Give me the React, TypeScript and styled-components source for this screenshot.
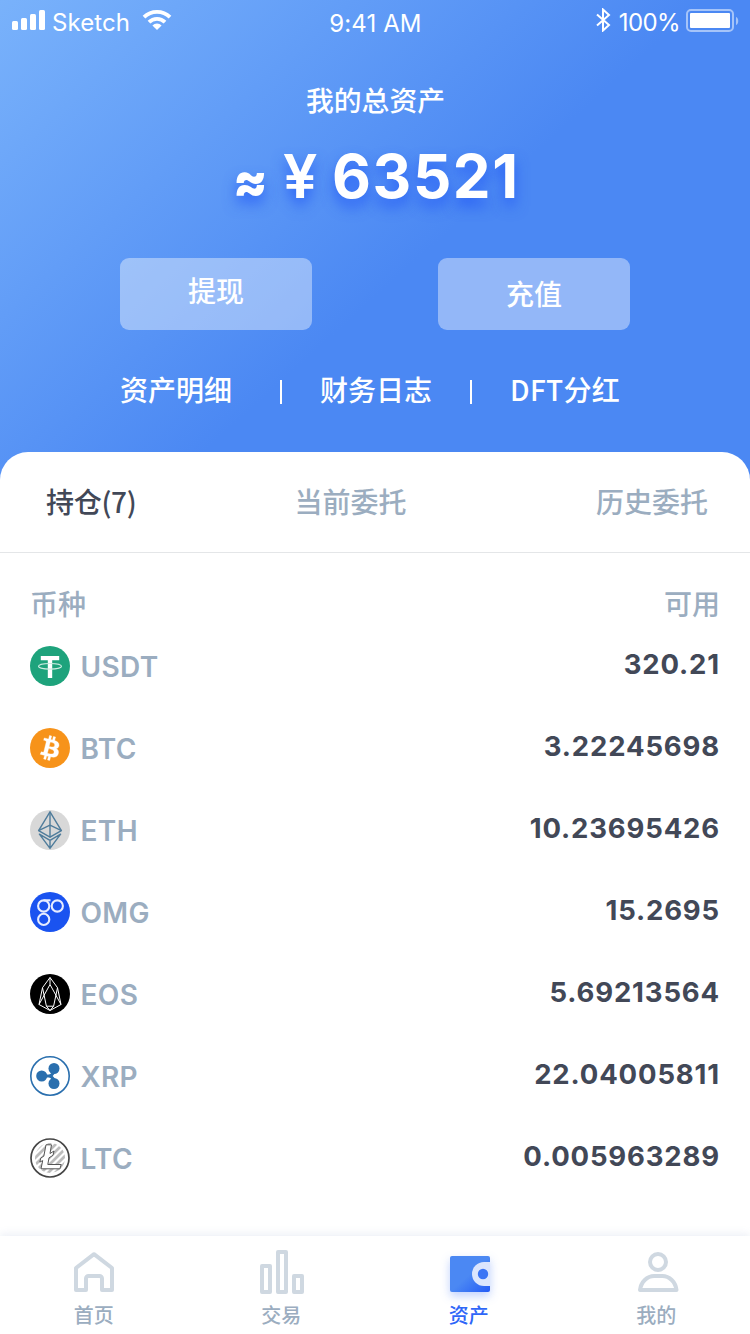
import React from "react";
import styled, { createGlobalStyle, css } from "styled-components";

const Global = createGlobalStyle`
  * { box-sizing: border-box; }
  body { margin: 0; background: #fff; }
  svg { display: block; }
`;

const latin = `Inter, "Noto Sans CJK SC", sans-serif`;
const cjk = `"Noto Sans CJK SC", sans-serif`;

const Screen = styled.div`
  width: 750px;
  height: 1334px;
  overflow: hidden;
  display: flex;
  flex-direction: column;
  background: #fff;
  font-family: ${latin};
  white-space: nowrap;
`;

const Header = styled.header`
  flex: none;
  height: 480px;
  color: #fff;
  background: linear-gradient(138deg, #79b2fb 0%, #4b88f3 55%, #4b88f3 100%);
`;

const StatusBar = styled.div`
  height: 44px;
  padding: 0 11px 0 12px;
  display: grid;
  grid-template-columns: 1fr auto 1fr;
  align-items: start;
`;

const StatusGroup = styled.div<{ $end?: boolean }>`
  display: flex;
  align-items: flex-start;
  justify-content: ${(p) => (p.$end ? "flex-end" : "flex-start")};
`;

const StatusText = styled.span<{ $spacing: number; $top?: number }>`
  font-size: 24px;
  font-weight: 400;
  line-height: 28px;
  padding-top: ${(p) => p.$top ?? 9}px;
  letter-spacing: ${(p) => p.$spacing}px;
`;

const Signal = styled.svg`
  margin: 10px 7px 0 0;
`;
const Wifi = styled.svg`
  margin: 9px 0 0 12px;
`;
const Bluetooth = styled.svg`
  margin: 8px 8px 0 0;
`;
const Battery = styled.svg`
  margin: 9px 0 0 6px;
`;

const Caption = styled.h1`
  margin: 35px 0 0;
  padding-left: 1px;
  font: 500 27.8px/40px ${cjk};
  text-align: center;
`;

const Total = styled.div`
  height: 72px;
  margin: 21px 0 0;
  padding-left: 233px;
  display: flex;
  font-size: 60px;
  line-height: 72px;
  font-weight: 700;
  text-shadow: 0 8px 14px rgba(36, 91, 246, 0.85);
`;

const Approx = styled.span`
  width: 50px;
  padding-top: 5px;
  font-size: 50px;
  font-weight: 900;
`;
const Yen = styled.span`
  width: 49px;
  font-weight: 600;
  font-size: 61px;
`;
const Amount = styled.span`
  letter-spacing: 1.6px;
`;

const Actions = styled.div`
  margin-top: 46px;
  padding: 0 120px;
  display: flex;
  justify-content: space-between;
`;

const ActionButton = styled.button<{ $lift?: number }>`
  width: 192px;
  height: 72px;
  border: 0;
  border-radius: 9px;
  padding: 0 0 ${(p) => p.$lift ?? 0}px;
  color: #fff;
  background: rgba(255, 255, 255, 0.4);
  font: 500 28px/40px ${cjk};
`;

const Links = styled.nav`
  margin-top: 39px;
  padding: 0 129px 0 120px;
  display: flex;
  align-items: center;
`;

const HeaderLink = styled.a<{ $spacing?: number }>`
  font: 500 28px/40px ${cjk};
  letter-spacing: ${(p) => p.$spacing ?? 0}px;
`;

const Divider = styled.i<{ $left: number; $right: number }>`
  width: 2px;
  height: 24px;
  margin: 6px ${(p) => p.$right}px 0 ${(p) => p.$left}px;
  background: #fff;
`;

const Sheet = styled.main`
  flex: 1;
  margin-top: -28px;
  border-radius: 28px 28px 0 0;
  background: #fff;
`;

const Tabs = styled.div`
  height: 101px;
  padding: 0 42px 2px 46px;
  display: grid;
  grid-template-columns: 248.5px 1fr auto;
  justify-items: start;
  align-items: center;
  border-bottom: 1px solid #e4e6e8;
`;

const Tab = styled.button<{ $active?: boolean }>`
  padding: 0;
  border: 0;
  background: none;
  font: 500 28px/40px ${cjk};
  letter-spacing: ${(p) => (p.$active ? -0.3 : 0)}px;
  color: ${(p) => (p.$active ? "#424857" : "#9badc0")};
`;

const ListHead = styled.div`
  padding: 30px 30px 0;
  display: flex;
  justify-content: space-between;
  font: 500 28px/40px ${cjk};
  color: #9badc0;
`;

const Rows = styled.ul`
  list-style: none;
  margin: 2px 0 0;
  padding: 0 30px;
`;

const Row = styled.li`
  height: 82px;
  display: flex;
  align-items: center;
`;

const CoinName = styled.span`
  margin-left: 10.5px;
  padding-top: 1px;
  flex: 1;
  font-size: 28px;
  line-height: 40px;
  font-weight: 600;
  letter-spacing: 0.35px;
  color: #9badc0;
`;

const CoinValue = styled.span`
  font-size: 27.5px;
  line-height: 40px;
  font-weight: 700;
  letter-spacing: 0.85px;
  padding-bottom: 4px;
  color: #424857;
`;

const TabBar = styled.nav`
  flex: none;
  height: 98px;
  display: grid;
  grid-template-columns: repeat(4, 1fr);
  background: #fff;
  box-shadow: 0 -2px 8px rgba(120, 140, 190, 0.14);
`;

const NavItem = styled.a<{ $active?: boolean }>`
  display: flex;
  flex-direction: column;
  align-items: center;
  padding-top: 14px;
  font: 500 20px/28px ${cjk};
  color: #9badc0;
  ${(p) =>
    p.$active &&
    css`
      color: #2e66f8;
    `}
  svg {
    overflow: visible;
    margin-bottom: 7px;
  }
`;

const Usdt = () => (
  <svg width="40" height="40" viewBox="0 0 40 40">
    <circle cx="20" cy="20" r="20" fill="#1ea37c" />
    <path d="M10.8 10h18.4v4.2h-7V32h-4.400V14.2h-7z" fill="#fff" />
    <ellipse cx="20" cy="20.300" rx="11.500" ry="2.800" fill="none" stroke="#cfece2" strokeWidth="1.100" />
  </svg>
);

const Btc = () => (
  <svg width="40" height="40" viewBox="0 0 32 32">
    <circle cx="16" cy="16" r="16" fill="#f7931a" />
    <path
      fill="#fff"
      stroke="#fff"
      strokeWidth="0.300"
      d="M23.189 14.02c.314-2.096-1.283-3.223-3.465-3.975l.708-2.84-1.728-.43-.69 2.765c-.454-.114-.92-.22-1.385-.326l.695-2.783L15.596 6l-.708 2.839c-.376-.086-.746-.17-1.104-.26l.002-.009-2.384-.595-.46 1.846s1.283.294 1.256.312c.7.175.826.638.805 1.006l-.806 3.235c.048.012.11.03.18.057l-.183-.045-1.13 4.532c-.086.212-.303.531-.793.41.018.025-1.256-.313-1.256-.313l-.858 1.978 2.25.561c.418.105.828.215 1.231.318l-.715 2.872 1.727.43.708-2.84c.472.127.93.245 1.378.357l-.706 2.828 1.728.43.715-2.866c2.948.558 5.164.333 6.097-2.333.752-2.146-.037-3.385-1.588-4.192 1.13-.26 1.98-1.003 2.207-2.538zm-3.95 5.538c-.533 2.147-4.148.986-5.32.695l.95-3.805c1.172.293 4.929.872 4.37 3.11zm.535-5.569c-.487 1.953-3.495.96-4.47.717l.86-3.45c.975.243 4.118.696 3.61 2.733z"
    />
  </svg>
);

const Eth = () => (
  <svg width="40" height="40" viewBox="0 0 40 40">
    <circle cx="20" cy="20" r="20" fill="#d8d8d8" />
    <g fill="none" stroke="#4f7c9b" strokeWidth="1.400" strokeLinejoin="round">
      <path d="M20 1.800L8.600 20.600 20 27.200l11.400-6.600z" />
      <path d="M20 1.800v25.400M8.600 20.600L20 15.200l11.400 5.400" />
      <path d="M9.400 24.200L20 38.400l10.600-14.200L20 30.400zM20 30.400v8" />
    </g>
  </svg>
);

const Omg = () => (
  <svg width="40" height="40" viewBox="0 0 40 40">
    <circle cx="20" cy="20" r="20" fill="#1a53f0" />
    <g fill="none" stroke="#e6ecff" strokeWidth="2.100">
      <circle cx="13.700" cy="14" r="5.600" />
      <circle cx="27.300" cy="14" r="5.600" />
      <circle cx="13.700" cy="27.400" r="5.600" />
      <path d="M13.700 8.300h6.800" />
    </g>
  </svg>
);

const Eos = () => (
  <svg width="40" height="40" viewBox="0 0 40 40">
    <circle cx="20" cy="20" r="20" fill="#000" />
    <g fill="none" stroke="#fff" strokeWidth="1" strokeLinejoin="round">
      <path d="M20 3.500l-7.500 10.200L9 30.500l11 6 11-6-3.500-16.800z" />
      <path d="M20 3.500v7M12.500 13.700l3.900 18.500M27.500 13.700l-3.900 18.500M20 10.500L9 30.500M20 10.500l11 20M16.400 32.200h7.200M16.400 32.200l3.600 4.300 3.600-4.300" />
    </g>
  </svg>
);

const Xrp = () => (
  <svg width="40" height="40" viewBox="0 0 40 40">
    <circle cx="20" cy="20" r="19.200" fill="#fff" stroke="#2a6fae" strokeWidth="1.600" />
    <g fill="#2a6fae">
      <circle cx="11.700" cy="20" r="5.500" />
      <circle cx="24" cy="12.500" r="5.500" />
      <circle cx="24" cy="27.500" r="5.500" />
    </g>
    <path d="M12 20h7.500M24.200 12.500c0 4-1.200 6.300-4.700 7.500 3.500 1.200 4.700 3.500 4.700 7.500" fill="none" stroke="#2a6fae" strokeWidth="3" />
  </svg>
);

const Ltc = () => (
  <svg width="40" height="40" viewBox="0 0 40 40">
    <defs>
      <clipPath id="ltc-inner">
        <circle cx="20" cy="20" r="15" />
      </clipPath>
    </defs>
    <circle cx="20" cy="20" r="19" fill="#fff" stroke="#454545" strokeWidth="1.700" />
    <g clipPath="url(#ltc-inner)" stroke="#bcbcbc" strokeWidth="2.700">
      <path d="M0 18L18 0M0 25L25 0M0 32L32 0M0 39L39 0M0 46L46 0M6 47L47 6M13 47L47 13M20 47L47 20" />
    </g>
    <path
      d="M16 6.800h5.500l-1.500 8.700 4-2.500-1 4.300-4 2.500-1.200 6.700h13.400l-1.300 4.300H11l1.700-8.200-2.900 1.500 1-4.100 3-1.800z"
      fill="#fff"
      stroke="#555"
      strokeWidth="1"
    />
  </svg>
);

const coins = [
  { name: "USDT", value: "320.21", Icon: Usdt },
  { name: "BTC", value: "3.22245698", Icon: Btc },
  { name: "ETH", value: "10.23695426", Icon: Eth },
  { name: "OMG", value: "15.2695", Icon: Omg },
  { name: "EOS", value: "5.69213564", Icon: Eos },
  { name: "XRP", value: "22.04005811", Icon: Xrp },
  { name: "LTC", value: "0.005963289", Icon: Ltc },
];

const HomeIcon = () => (
  <svg width="44" height="44" viewBox="0 0 44 44" fill="none" stroke="#cfd8e1" strokeWidth="4" strokeLinejoin="round">
    <path d="M4 18L22 4.200l18 13.800V40H30V28.500a2.500 2.500 0 0 0-2.500-2.500h-11a2.500 2.500 0 0 0-2.500 2.500V40H4z" />
  </svg>
);

const ChartIcon = () => (
  <svg width="44" height="44" viewBox="0 0 44 44" fill="none" stroke="#cfd8e1" strokeWidth="4" strokeLinejoin="round">
    <rect x="3" y="16" width="8" height="26" />
    <rect x="19" y="2" width="8" height="40" />
    <rect x="35" y="26" width="8" height="16" />
  </svg>
);

const WalletShape = styled.svg`
  filter: drop-shadow(0 4px 5px rgba(46, 102, 248, 0.3));
`;

const WalletIcon = () => (
  <WalletShape width="44" height="44" viewBox="0 0 44 44">
    <defs>
      <linearGradient id="wallet" x1="0" y1="0" x2="1" y2="1">
        <stop offset="0.500" stopColor="#4b88f3" />
        <stop offset="1" stopColor="#245bf6" />
      </linearGradient>
    </defs>
    <rect x="3" y="6" width="40" height="36" rx="2" fill="url(#wallet)" />
    <path d="M43 12h-6a12 12 0 0 0 0 24h6z" fill="#dbe5fd" />
    <circle cx="36" cy="24" r="5.200" fill="#3a74f5" />
  </WalletShape>
);

const UserIcon = () => (
  <svg width="44" height="44" viewBox="0 0 44 44" fill="none" stroke="#cfd8e1" strokeWidth="4" strokeLinejoin="round">
    <circle cx="24" cy="12" r="8" />
    <path d="M6 40h36.500c-1-8-7-14-14.250-14h-8c-7.250 0-13.250 6-14.250 14z" />
  </svg>
);

const navItems = [
  { label: "首页", Icon: HomeIcon },
  { label: "交易", Icon: ChartIcon },
  { label: "资产", Icon: WalletIcon, active: true },
  { label: "我的", Icon: UserIcon },
];

export default function App() {
  return (
    <Screen>
      <Global />
      <Header>
        <StatusBar>
          <StatusGroup>
            <Signal width="33" height="20" fill="#fff">
              <rect x="0" y="11" width="6" height="9" rx="1.500" />
              <rect x="9" y="8" width="6" height="12" rx="1.500" />
              <rect x="18" y="4" width="6" height="16" rx="1.500" />
              <rect x="27" y="0" width="6" height="20" rx="1.500" />
            </Signal>
            <StatusText $spacing={0.1}>Sketch</StatusText>
            <Wifi width="30" height="22" viewBox="0 0 30 22" fill="none" stroke="#fff" strokeWidth="3.800">
              <path d="M2 8.200a18.400 18.400 0 0 1 26 0" />
              <path d="M7 13.200a11.300 11.300 0 0 1 16 0" />
              <path d="M15 21l-4.600-4.600a6.500 6.500 0 0 1 9.200 0z" fill="#fff" stroke="none" />
            </Wifi>
          </StatusGroup>
          <StatusText $spacing={0.1} $top={10}>9:41 AM</StatusText>
          <StatusGroup $end>
            <Bluetooth width="16" height="24" viewBox="0 0 16 24" fill="none" stroke="#fff" strokeWidth="2">
              <path d="M2 6.500l12 10.500-6 5.500V1.500L14 7 2 17.500" />
            </Bluetooth>
            <StatusText $spacing={-0.6}>100%</StatusText>
            <Battery width="53" height="24" viewBox="0 0 53 24">
              <rect x="1" y="1" width="46" height="21" rx="4" fill="none" stroke="#fff" strokeOpacity="0.500" strokeWidth="2" />
              <rect x="4" y="4" width="40" height="15" rx="1" fill="#fff" />
              <path d="M50 8c3 1 3 7 0 8z" fill="#fff" fillOpacity="0.500" />
            </Battery>
          </StatusGroup>
        </StatusBar>
        <Caption>我的总资产</Caption>
        <Total>
          <Approx>≈</Approx>
          <Yen>¥</Yen>
          <Amount>63521</Amount>
        </Total>
        <Actions>
          <ActionButton $lift={8}>提现</ActionButton>
          <ActionButton $lift={2}>充值</ActionButton>
        </Actions>
        <Links>
          <HeaderLink>资产明细</HeaderLink>
          <Divider $left={48} $right={38} />
          <HeaderLink>财务日志</HeaderLink>
          <Divider $left={38} $right={38} />
          <HeaderLink $spacing={0.3}>DFT分红</HeaderLink>
        </Links>
      </Header>
      <Sheet>
        <Tabs>
          <Tab $active>持仓(7)</Tab>
          <Tab>当前委托</Tab>
          <Tab>历史委托</Tab>
        </Tabs>
        <ListHead>
          <span>币种</span>
          <span>可用</span>
        </ListHead>
        <Rows>
          {coins.map(({ name, value, Icon }) => (
            <Row key={name}>
              <Icon />
              <CoinName>{name}</CoinName>
              <CoinValue>{value}</CoinValue>
            </Row>
          ))}
        </Rows>
      </Sheet>
      <TabBar>
        {navItems.map(({ label, Icon, active }) => (
          <NavItem key={label} $active={active}>
            <Icon />
            <span>{label}</span>
          </NavItem>
        ))}
      </TabBar>
    </Screen>
  );
}
